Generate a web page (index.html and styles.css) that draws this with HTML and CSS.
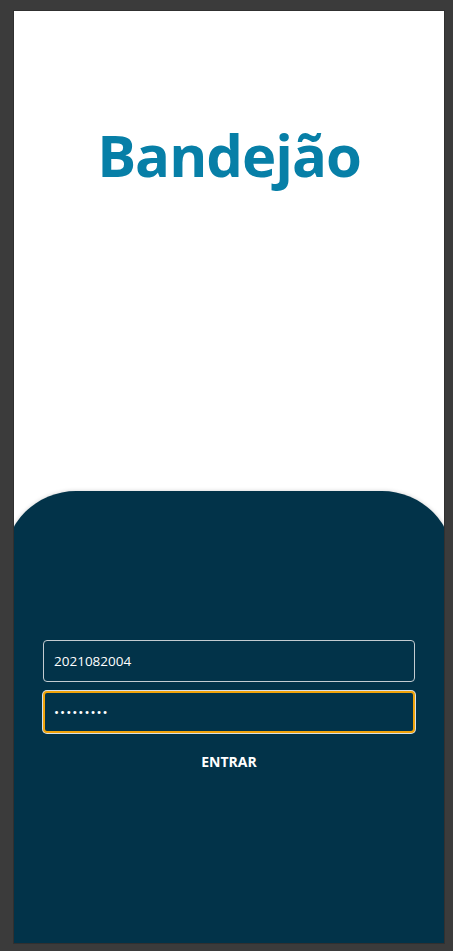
FILE: index.html
```html
<!DOCTYPE html>
<html lang="pt-BR">
<head>
<meta charset="utf-8">
<title>Bandejão</title>
<link rel="stylesheet" href="styles.css">
</head>
<body>
<main class="screen">
  <section class="hero">
    <h1 class="title">Bandejão</h1>
  </section>
  <section class="login">
    <form class="form">
      <input class="field" type="text" value="2021082004">
      <input class="field field-focus" type="password" value="123456789">
      <button class="submit" type="button">ENTRAR</button>
    </form>
  </section>
</main>
</body>
</html>
```

FILE: styles.css
```css
html, body {
  margin: 0;
  padding: 0;
}
body {
  background: #3b3b3b;
  padding: 11px 9px 8px 14px;
  font-family: "Open Sans", "Noto Sans", sans-serif;
}
.screen {
  width: 430px;
  height: 932px;
  background: #ffffff;
  overflow: hidden;
  display: flex;
  flex-direction: column;
  box-shadow: 0 0 0 1px #303030;
}
.hero {
  height: 480px;
  display: flex;
  justify-content: center;
}
.title {
  margin: 104px 0 0;
  font-size: 58px;
  line-height: 80px;
  font-weight: 700;
  color: #077fa7;
  letter-spacing: -1px;
}
.login {
  flex: 1;
  margin: 0 -10px;
  background: #023349;
  border-radius: 72px 72px 0 0;
  box-shadow: 0 0 4px rgba(0, 0, 0, 0.18);
  padding: 149px 39px 0;
}
.form {
  display: flex;
  flex-direction: column;
  gap: 9px;
}
.field {
  box-sizing: border-box;
  height: 42px;
  width: 100%;
  margin: 0;
  padding: 0 10px;
  background: #023349;
  border: 1px solid #c3ccd1;
  border-radius: 4px;
  color: #ffffff;
  font-family: "Open Sans", sans-serif;
  font-size: 13.5px;
  outline: none;
}
.field-focus {
  border: 2px solid #f0a30a;
  padding: 0 9px;
  box-shadow: 0 0 0 1px rgba(255, 255, 255, 0.85);
  letter-spacing: 1px;
}
.submit {
  margin-top: 1px;
  height: 36px;
  background: transparent;
  border: none;
  color: #ffffff;
  font-family: "Open Sans", sans-serif;
  font-weight: 700;
  font-size: 14px;
  cursor: pointer;
}
```
